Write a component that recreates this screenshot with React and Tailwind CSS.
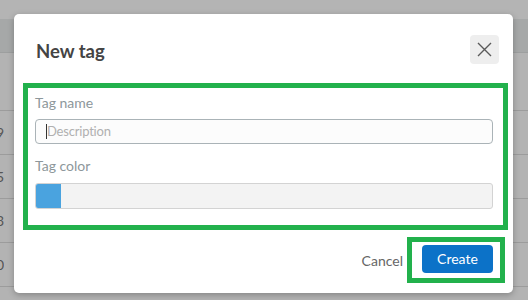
import React from 'react';

const rows = ['9', '5', '3', '0', ''];

const CloseIcon = () => (
  <svg width="15" height="15" viewBox="0 0 15 15" fill="none" stroke="#5a5a5a" strokeWidth="1.4">
    <path d="M1 1L14 14M14 1L1 14" />
  </svg>
);

export default function App() {
  return (
    <div
      className="relative w-[528px] h-[300px] overflow-hidden bg-[#b3b3b3]"
      style={{ fontFamily: "Lato, 'Liberation Sans', sans-serif" }}
    >
      {/* page behind the overlay */}
      <div className="flex flex-col">
        <div className="h-[19px] bg-[#b4b4b4]" />
        <div className="h-[34px] bg-[#a6a8a8] border-b border-[#9d9f9f]" />
        <div className="h-[58px] border-b border-[#9c9c9c]" />
        {rows.map((n, i) => (
          <div key={i} className="h-[44px] border-b border-[#9c9c9c] flex items-center">
            <div className="w-[4px] overflow-hidden flex justify-end">
              <span className="text-[14px] text-[#555] leading-none">{n}</span>
            </div>
          </div>
        ))}
      </div>

      {/* modal */}
      <div className="absolute left-[14px] top-[14px] w-[499px] h-[279px] bg-white rounded-[5px] shadow-[0_2px_6px_rgba(0,0,0,0.25)] flex flex-col">
        <div className="flex items-start justify-between pl-[22px] pr-[14px] pt-[21px] h-[69px]">
          <h2 className="text-[18.5px] font-bold text-[#444] leading-none mt-[7px]">New tag</h2>
          <button className="w-[29px] h-[29px] rounded-[4px] bg-[#eeeeee] flex items-center justify-center">
            <CloseIcon />
          </button>
        </div>

        <div className="ml-[9px] mr-[5px] border-[5px] border-[#22b14c] pl-[7px] pr-[10px] pt-[6px] pb-[16px] flex flex-col">
          <label className="text-[14px] text-[#8d979b] leading-[18px]">Tag name</label>
          <div className="mt-[7px] h-[25px] border border-[#aab3b7] rounded-[4px] bg-[#fcfcfc] flex items-center pl-[10px]">
            <span className="w-px h-[15px] bg-[#333]" />
            <span className="text-[13px] text-[#b0b0b0] leading-none tracking-[-0.2px]">Description</span>
          </div>
          <label className="mt-[13px] text-[14px] text-[#8d979b] leading-[18px]">Tag color</label>
          <div className="mt-[8px] h-[26px] border border-[#d3d3d3] rounded-[3px] bg-[#f3f3f3] flex overflow-hidden">
            <div className="w-[25px] h-full bg-[#4aa3df]" />
          </div>
        </div>

        <div className="flex items-center justify-end mt-[7px] mr-[8px]">
          <span className="text-[14px] text-[#666] mr-[4px]">Cancel</span>
          <div className="border-[5px] border-[#22b14c] pl-[10px] pr-[7px] pt-[3px] pb-[5px]">
            <button className="w-[71px] h-[28px] rounded-[4px] bg-[#0c72c8] text-white text-[14px] leading-none flex items-center justify-center">
              Create
            </button>
          </div>
        </div>
      </div>
    </div>
  );
}
